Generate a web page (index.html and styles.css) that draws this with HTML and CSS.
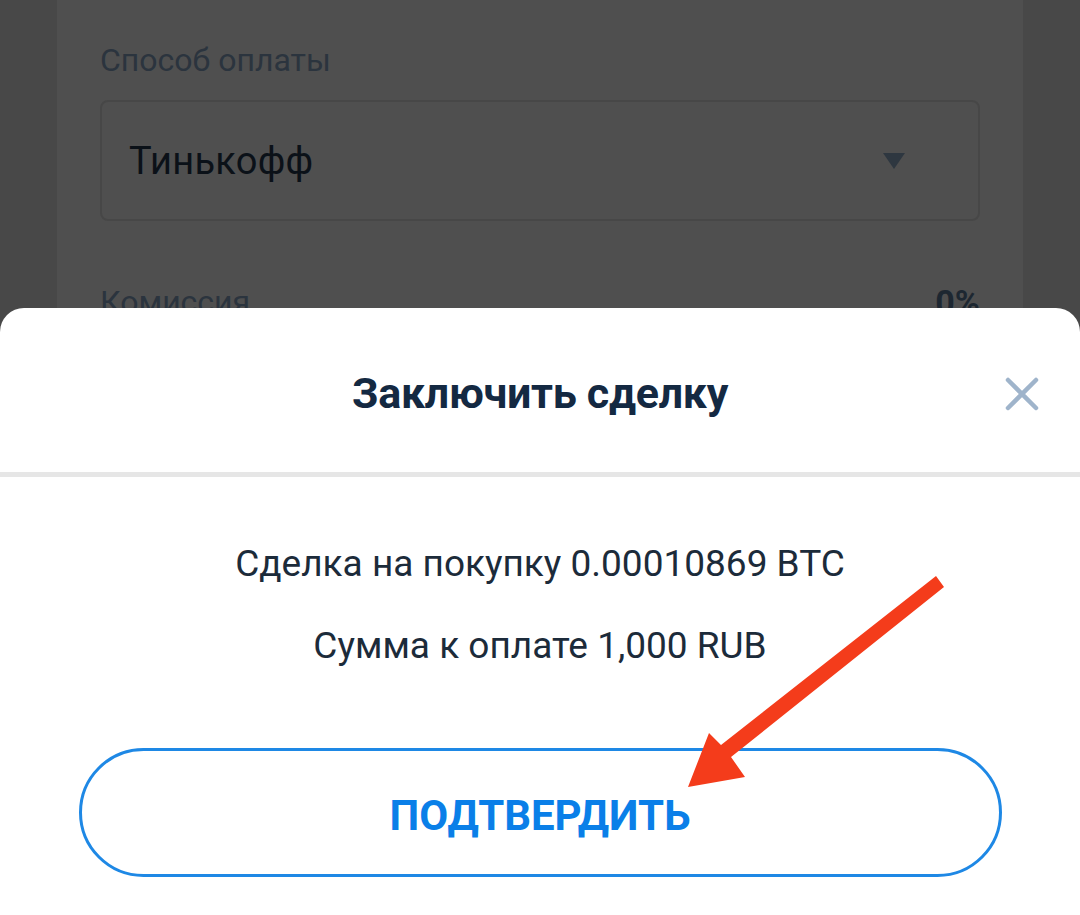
FILE: index.html
```html
<!DOCTYPE html>
<html lang="ru">
<head>
<meta charset="utf-8">
<title>Заключить сделку</title>
<link rel="stylesheet" href="styles.css">
</head>
<body>
<div class="page">
  <div class="card">
    <div class="field-label">Способ оплаты</div>
    <div class="select">
      <span class="select-value">Тинькофф</span>
      <span class="select-caret"></span>
    </div>
    <div class="row">
      <span class="row-label">Комиссия</span>
      <span class="row-value">0%</span>
    </div>
  </div>
</div>

<div class="sheet">
  <div class="sheet-header">
    <h1 class="sheet-title">Заключить сделку</h1>
    <button class="close" aria-label="Закрыть">
      <svg width="34" height="34" viewBox="0 0 34 34"><path d="M3 3 L31 31 M31 3 L3 31" stroke="#9fb4cb" stroke-width="4.5" stroke-linecap="round" fill="none"/></svg>
    </button>
  </div>
  <div class="sheet-body">
    <p class="line">Сделка на покупку 0.00010869 BTC</p>
    <p class="line">Сумма к оплате 1,000 RUB</p>
    <button class="confirm">ПОДТВЕРДИТЬ</button>
  </div>
</div>

<svg class="arrow" width="1080" height="915" viewBox="0 0 1080 915">
  <polygon fill="#f43c1b" points="936,576 944,587 731,757 745,777 688,787 709,733 721,745"/>
</svg>
</body>
</html>
```

FILE: styles.css
```css
html, body {
  margin: 0;
  padding: 0;
}
body {
  width: 1080px;
  height: 915px;
  overflow: hidden;
  background: #484848;
  font-family: Roboto, "Noto Sans", sans-serif;
  position: relative;
}
.page {
  padding-left: 57px;
}
.card {
  width: 966px;
  height: 915px;
  background: #4f4f4f;
  padding: 41px 43px 0;
  box-sizing: border-box;
}
.field-label {
  font-size: 32px;
  line-height: 38px;
  color: #2b343e;
}
.select {
  margin-top: 21px;
  height: 121px;
  box-sizing: border-box;
  border: 2px solid #474747;
  border-radius: 8px;
  display: flex;
  align-items: center;
  justify-content: space-between;
  padding: 0 73px 0 27px;
}
.select-value {
  font-size: 38px;
  color: #0b1118;
  letter-spacing: 0.3px;
}
.select-caret {
  width: 0;
  height: 0;
  border-left: 11px solid transparent;
  border-right: 11px solid transparent;
  border-top: 16px solid #2e3740;
}
.row {
  margin-top: 62px;
  display: flex;
  justify-content: space-between;
  font-size: 32px;
  line-height: 38px;
  color: #2b343e;
}
.row-value {
  font-weight: 700;
  font-size: 34px;
  color: #1d2731;
}
.sheet {
  position: absolute;
  left: 0;
  right: 0;
  top: 308px;
  bottom: 0;
  background: #fff;
  border-radius: 24px 24px 0 0;
}
.sheet-header {
  height: 164px;
  display: flex;
  align-items: center;
  justify-content: center;
  position: relative;
  border-bottom: 5px solid #e6e6e6;
}
.sheet-title {
  margin: 0;
  padding-top: 6px;
  font-size: 43px;
  font-weight: 700;
  color: #142942;
  letter-spacing: -0.3px;
}
.close {
  position: absolute;
  right: 41px;
  top: 69px;
  width: 34px;
  height: 34px;
  padding: 0;
  border: 0;
  background: none;
}
.sheet-body {
  display: flex;
  flex-direction: column;
  align-items: center;
  padding-top: 65px;
}
.line {
  margin: 0 0 38px;
  font-size: 37px;
  line-height: 44px;
  color: #1c2b3a;
}
.line + .line {
  margin-bottom: 0;
}
.confirm {
  margin-top: 80px;
  width: 923px;
  height: 129px;
  border: 3px solid #1e88e5;
  border-radius: 65px;
  background: #fff;
  font-family: Roboto, "Noto Sans", sans-serif;
  font-size: 42px;
  font-weight: 700;
  color: #0a7fe8;
  padding-top: 6px;
}
.arrow {
  position: absolute;
  left: 0;
  top: 0;
  pointer-events: none;
}
```
